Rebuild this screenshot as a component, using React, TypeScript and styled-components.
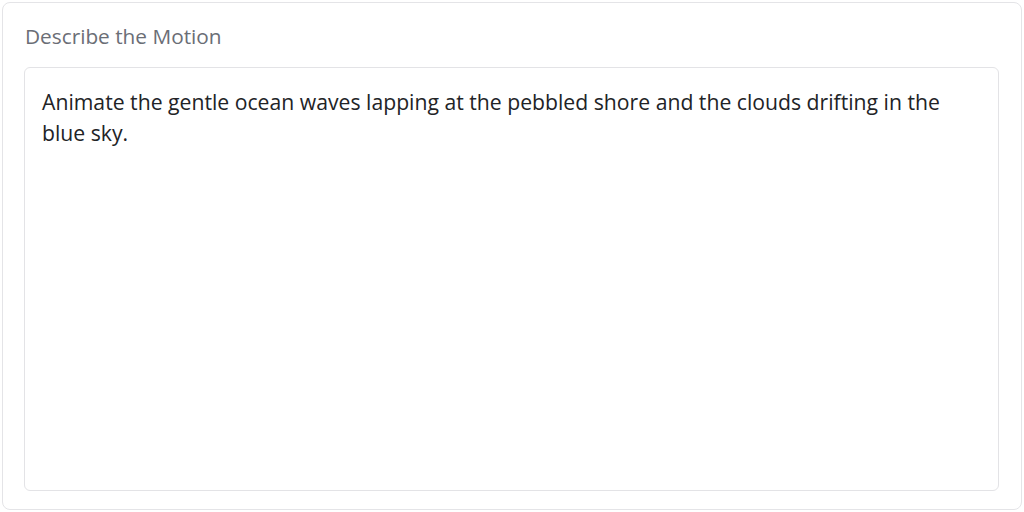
import { FC } from "react";
import styled, { createGlobalStyle } from "styled-components";

const GlobalStyle = createGlobalStyle`
  html, body {
    margin: 0;
    padding: 0;
    background: #ffffff;
  }
  body {
    font-family: "Open Sans", Lato, "Liberation Sans", sans-serif;
  }
`;

const prompt =
  "Animate the gentle ocean waves lapping at the pebbled shore and the clouds drifting in the blue sky.";

const App: FC = () => (
  <>
    <GlobalStyle />
    <Page>
      <Card>
        <Label htmlFor="motion">Describe the Motion</Label>
        <Prompt id="motion" defaultValue={prompt} spellCheck={false} />
      </Card>
    </Page>
  </>
);

export default App;

const Page = styled.div`
  width: 1024px;
  height: 512px;
  padding: 2px;
  box-sizing: border-box;
`;

const Card = styled.div`
  height: 100%;
  box-sizing: border-box;
  border: 1px solid #e4e4e7;
  border-radius: 8px;
  padding: 18px 22px 18px 21px;
  display: flex;
  flex-direction: column;
  gap: 16px;
  background: #fff;
`;

const Label = styled.label`
  font-size: 20.8px;
  line-height: 30px;
  color: #6b6e76;
  padding-left: 1px;
`;

const Prompt = styled.textarea`
  flex: 1;
  resize: none;
  outline: none;
  border: 1px solid #e3e3e6;
  border-radius: 6px;
  padding: 19px 18px 14px 17px;
  font-family: "Open Sans", Lato, "Liberation Sans", sans-serif;
  font-size: 21.2px;
  line-height: 30.5px;
  color: #222326;
  background: #fff;
`;
